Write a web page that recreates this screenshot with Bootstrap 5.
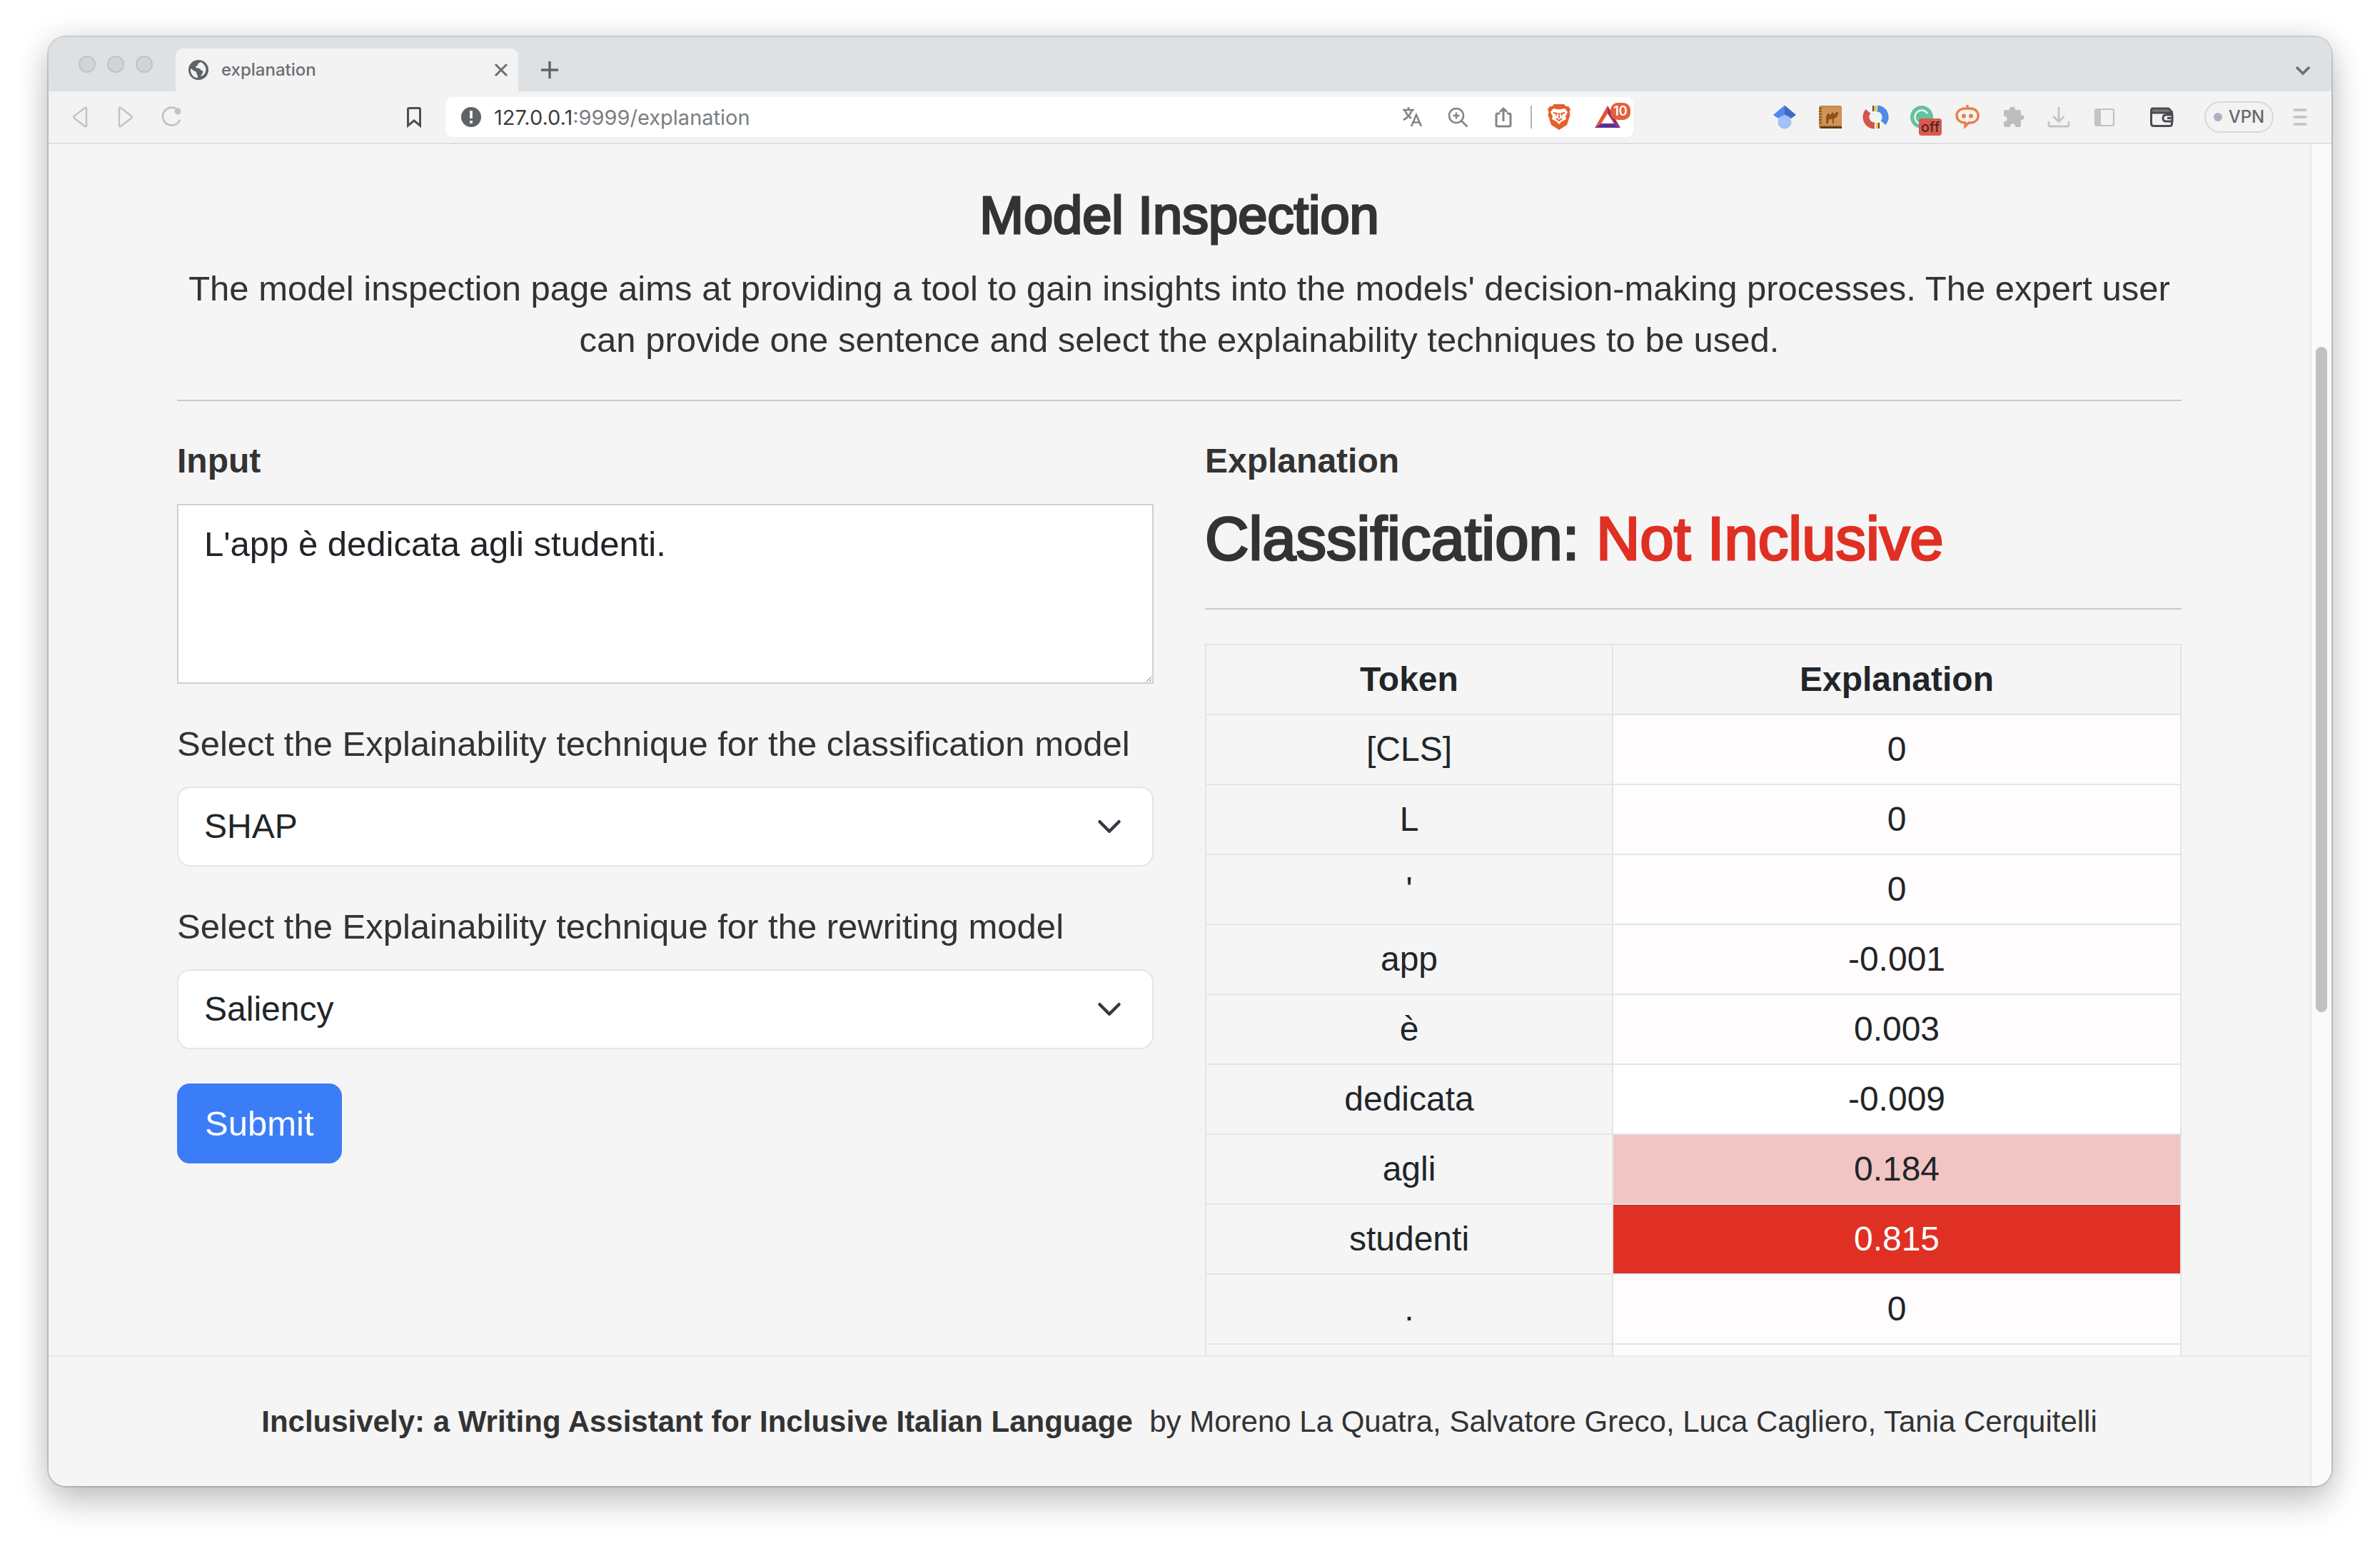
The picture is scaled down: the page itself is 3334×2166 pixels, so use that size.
<!DOCTYPE html>
<html lang="en">
<head>
<meta charset="utf-8">
<meta name="viewport" content="width=device-width, initial-scale=1">
<title>explanation</title>
<link href="https://cdn.jsdelivr.net/npm/bootstrap@5.3.0/dist/css/bootstrap.min.css" rel="stylesheet">
<style>
  html { font-size: 48px; }
  body {
    --bs-body-font-family: "Liberation Sans", Arial, sans-serif;
    --bs-border-width: 2px;
    background: #fff;
    color: #333;
    height: 100vh;
    padding: 52px 68px 84px;
    overflow: hidden;
  }
  .app-window {
    border-radius: 24px;
    background: #f5f5f5;
    box-shadow: 0 0 0 2px rgba(0,0,0,.14), 0 24px 48px rgba(0,0,0,.2), 0 0 44px rgba(0,0,0,.12);
  }
  /* browser chrome */
  .chrome-ui { font-family: Inter, Roboto, sans-serif; line-height: 1; color: #5f6368; }
  .chrome-ui button { border: 0; background: none; padding: 0; line-height: 0; }
  .tab-strip { background: #dde1e4; height: 76px; border-radius: 24px 24px 0 0; }
  .lights { gap: 16px; padding: 26px 32px 0 42px; }
  .lights i { width: 24px; height: 24px; border-radius: 50%; background: #d3d4d6; border: 2px solid #c2c3c5; }
  .page-tab { width: 480px; height: 60px; background: #f3f3f3; border-radius: 10px 10px 0 0; padding: 0 14px 0 18px; margin-right: 30px; font-size: 24px; font-weight: 500; color: #6b6e72; }
  .page-tab span { margin-left: 18px; }
  .strip-end { padding-right: 26px; }
  .strip-cell { height: 60px; }
  .tool-row { height: 74px; background: #f3f3f3; border-bottom: 2px solid #dcdfe5; padding: 0 26px; }
  .icon-set { gap: 28px; }
  .ico { width: 36px; height: 36px; display: block; overflow: visible; flex: none; }
  .faint, .faint button { color: #c3c3c3; }
  .mark-btn { margin: 0 26px 0 304px; color: #4d5054; }
  .address { height: 56px; background: #fff; border-radius: 10px; padding: 0 18px; margin-right: 194px; min-width: 0; }
  .address a { font-size: 29px; color: #7b7e82; text-decoration: none; margin-left: 14px; }
  .address a b { font-weight: 400; color: #3c3f43; }
  .address .icon-set { color: #858585; }
  .divider { width: 2px; height: 32px; background: #b4b4b4; margin: 0 -8px; }
  .rewards { margin-left: 4px; }
  .count { top: -2px; right: -14px; width: 28px; height: 24px; border-radius: 10px; background: #e4603a; color: #fff; font-size: 18px; line-height: 24px; font-weight: 600; }
  .off-tag { top: 20px; left: 14px; width: 32px; height: 24px; border-radius: 4px; background: #da5a4e; color: #4a2522; font-size: 20px; line-height: 24px; font-weight: 500; }
  .wallet { margin: 0 42px 0 44px; color: #4a4d51; }
  .chrome-ui .vpn { width: 97px; height: 44px; border: 2px solid #d5d7dc; border-radius: 22px; font-size: 24px; font-weight: 500; line-height: 1; gap: 9px; margin-right: 19px; color: #65686d; }
  .vpn i { width: 12px; height: 12px; border-radius: 50%; background: #adb1c4; }
  /* page */
  .viewport-area { background: #f5f5f5; border-radius: 0 0 24px 24px; }
  .page-scroll { padding-top: 58px; }
  .page-body { max-width: 2880px; --bs-gutter-x: 72px; }
  .page-body .row { --bs-gutter-x: 72px; }
  .title-md { font-size: 74px; line-height: 84px; font-weight: 400; -webkit-text-stroke: 3px currentColor; }
  .title-lg { font-size: 85px; line-height: 98px; font-weight: 400; -webkit-text-stroke: 3px currentColor; }
  .not-inclusive { color: #df3023; }
  .intro, .field-label, textarea.form-control, .btn-primary { font-size: 49px; line-height: 72px; }
  hr { border-top-width: 2px; border-color: #888; opacity: .4; }
  .form-label { line-height: 72px; }
  textarea.form-control { height: 252px; border-radius: 0; border-color: #cfcfcf; color: #212529; }
  .form-select { border-color: #e2e6e9; border-radius: 18px; color: #212529; background-size: 48px 36px; background-position: right 36px center; }
  .btn-primary { --bs-btn-bg: #3b7df7; --bs-btn-border-color: #3b7df7; --bs-btn-padding-x: 37px; --bs-btn-border-radius: 18px; }
  .token-table { --bs-table-bg: transparent; --bs-table-color: #212529; border-color: #e1e5e9; border-collapse: collapse; }
  .token-table th:first-child { width: 570px; }
  .token-table .near-zero { background-color: #fffcfd; }
  .token-table .zero { background-color: #fff; }
  .token-table .mild { background-color: #f2c5c5; }
  .token-table .strong { background-color: #df3023; color: #fff; }
  .page-footer { height: 183px; border-top: 2px solid #e9e9e9; font-size: 42px; }
  .scroll-track { width: 30px; background: #fafafa; border-left: 2px solid #e8e8e8; padding: 284px 6px 0; border-radius: 0 0 24px 0; }
  .scroll-thumb { height: 932px; border-radius: 8px; background: #c1c1c1; }
</style>
</head>
<body>
<div class="app-window d-flex flex-column h-100 overflow-visible">
  <header class="chrome-ui">
    <div class="tab-strip d-flex align-items-end">
      <div class="lights d-flex align-self-start"><i></i><i></i><i></i></div>
      <div class="page-tab d-flex align-items-center">
        <svg width="28" height="28" viewBox="0 0 28 28"><circle cx="14" cy="14" r="14" fill="#5f6368"/><path d="M17 3c-2 1-4 2-4 4 0 1-2 1-3 3 1 2 3 1 5 2 2 0 2 3 4 3 1 0 2 1 1 3l-3 5c4-1 7-4 7.500-9 0-5-3-9-7.500-11z" fill="#f3f3f3"/><path d="M3 12l6 4c2 0 3 1 2 3l2 3v3C7 25 3 20 3 14z" fill="#f3f3f3"/></svg>
        <span>explanation</span>
        <button class="ms-auto" aria-label="Close tab"><svg width="20" height="20" viewBox="0 0 20 20"><path d="M2 2l16 16M18 2L2 18" stroke="#6b6e72" stroke-width="3"/></svg></button>
      </div>
      <div class="strip-cell d-flex align-items-center"><button aria-label="New tab"><svg width="28" height="28" viewBox="0 0 28 28"><path d="M14 2v24M2 14h24" stroke="#5f6368" stroke-width="3.400"/></svg></button></div>
      <div class="strip-cell strip-end d-flex align-items-center ms-auto"><button aria-label="Search tabs"><svg width="28" height="28" viewBox="0 0 28 28"><path d="M5 10l9 9 9-9" fill="none" stroke="#6b6e72" stroke-width="3.600"/></svg></button></div>
    </div>
    <div class="tool-row d-flex align-items-center">
      <div class="icon-set faint d-flex">
        <button aria-label="Back"><svg class="ico" viewBox="0 0 36 36"><path d="M27 6v24q0 2-2 1L10 19.500q-1.500-1.500 0-3L25 5q2-1 2 1z" fill="none" stroke="currentColor" stroke-width="2.500"/></svg></button>
        <button aria-label="Forward"><svg class="ico" viewBox="0 0 36 36"><path d="M9 6v24q0 2 2 1l15-11.500q1.500-1.500 0-3L11 5q-2-1-2 1z" fill="none" stroke="currentColor" stroke-width="2.500"/></svg></button>
        <button aria-label="Reload"><svg class="ico" viewBox="0 0 36 36"><path d="M28 9A12.500 12.500 0 1 0 30 22" fill="none" stroke="currentColor" stroke-width="2.800"/><circle cx="27" cy="10" r="4.500" fill="currentColor"/></svg></button>
      </div>
      <button class="mark-btn" aria-label="Bookmark"><svg class="ico" viewBox="0 0 36 36"><path d="M9.500 30V7q0-1.500 1.500-1.500h14q1.500 0 1.500 1.500v23l-8.500-7z" fill="none" stroke="currentColor" stroke-width="3"/></svg></button>
      <div class="address d-flex align-items-center flex-grow-1">
        <svg class="ico" viewBox="0 0 36 36"><circle cx="18" cy="18" r="14" fill="#5f6368"/><path d="M18 9v11M18 23v4" stroke="#fff" stroke-width="3.600"/></svg>
        <a href="#"><b>127.0.0.1</b>:9999/explanation</a>
        <div class="icon-set d-flex align-items-center ms-auto">
          <svg class="ico" viewBox="0 0 36 36"><g fill="none" stroke="currentColor" stroke-width="2.600"><path d="M5 8h16M13 4v4M18 8c-2 6-6 11-12 14M8 8c2 6 5 9 9 12"/><path d="M17 31l7-16 7 16M19.500 25.500h9"/></g></svg>
          <svg class="ico" viewBox="0 0 36 36"><g fill="none" stroke="currentColor" stroke-width="2.600"><circle cx="16" cy="16" r="10"/><path d="M23.500 23.500l8 8M16 11.500v9M11.500 16h9"/></g></svg>
          <svg class="ico" viewBox="0 0 36 36"><path d="M13 13H10q-2 0-2 2v14q0 2 2 2h16q2 0 2-2V15q0-2-2-2h-3M18 24V7M13 11l5-5 5 5" fill="none" stroke="currentColor" stroke-width="3"/></svg>
          <span class="divider"></span>
          <svg class="ico" viewBox="0 0 36 36"><path d="M11 0h14l3 3 3 0 3 4-1.500 4 1 4-4.500 14-11 7-11-7-4.500-14 1-4L2 7l3-4 3 0z" fill="#e5602b"/><path d="M10 6l8 1.500L26 6l4 5-3 6 1 4-6 3-4 4-4-4-6-3 1-4-3-6z" fill="#fff"/><path d="M10 12l5 1-1 3M26 12l-5 1 1 3M18 12v8M14 20l4 3 4-3" fill="none" stroke="#e5602b" stroke-width="1.800"/></svg>
          <div class="rewards position-relative">
            <svg class="ico" viewBox="0 0 36 36"><path d="M18 2L0 33l9-6 9-14z" fill="#e8522f"/><path d="M18 2v11l9 14 9 6z" fill="#a02c63"/><path d="M0 33l9-6h18l9 6z" fill="#5f2f91"/></svg>
            <span class="count position-absolute text-center">10</span>
          </div>
        </div>
      </div>
      <div class="icon-set faint d-flex">
        <svg class="ico" viewBox="0 0 36 36"><path d="M18 1.500L2 15l7 5 9-5z" fill="#5288ee"/><path d="M18 1.500L34 15l-7 5-9-5z" fill="#3f6bc4"/><circle cx="18" cy="25" r="9.500" fill="#a3c0f8"/></svg>
        <svg class="ico" viewBox="0 0 36 36"><rect x="2" y="2" width="32" height="32" rx="3" fill="#c98544"/><rect x="7" y="4" width="26" height="25" rx="2" fill="#d09457"/><path d="M3 31h31v3H5z" fill="#5e3a18"/><path d="M4 5v24" stroke="#7d5024" stroke-width="3" stroke-dasharray="2 2"/><path d="M12 27V17l3-5 3 3 3-4 3 3 2-3 3 0 0 3-3 5-3 1v7h-2v-6h-5l-1 6z" fill="#8c531f"/></svg>
        <svg class="ico" viewBox="0 0 36 36"><g fill="none" stroke-width="9"><path d="M7 10A12 12 0 0 0 16 30" stroke="#d4554a"/><path d="M20 6A12 12 0 0 1 28 26" stroke="#4d8be6"/></g><path d="M15 2h4v8h-4zM18 26h4v8h-4z" fill="#f0c33c"/><path d="M14 2v8M22 26v8" stroke="#594f3c" stroke-width="2"/></svg>
        <div class="position-relative">
          <svg class="ico" viewBox="0 0 36 36"><circle cx="18" cy="18" r="16" fill="#66c1a1"/><path d="M26 13a9.500 9.500 0 1 0-5 14" fill="none" stroke="#e6f5ef" stroke-width="2.600"/></svg>
          <span class="off-tag position-absolute text-center">off</span>
        </div>
        <svg class="ico" viewBox="0 0 36 36"><path d="M15 6h7c15 0 15 20 0 20h-2l-5 5v-5C-1 26-1 6 15 6zM18 6V1" fill="none" stroke="#e88146" stroke-width="3.400"/><circle cx="13" cy="16.500" r="3" fill="#e88146"/><circle cx="23" cy="16.500" r="3" fill="#e88146"/></svg>
        <svg class="ico" viewBox="0 0 36 36"><path d="M5 10q0-2 2-2h6c-1-6 9-6 8 0h6q2 0 2 2v5c6-1 6 8 0 7v8q0 2-2 2h-6c1-6-8-6-7 0H7q-2 0-2-2v-6c6 1 6-8 0-7z" fill="#bebebe"/></svg>
        <svg class="ico" viewBox="0 0 36 36"><path d="M18 4v20M10.500 17l7.500 7.500 7.500-7.500M4 24v5q0 2 2 2h24q2 0 2-2v-5" fill="none" stroke="currentColor" stroke-width="2.800"/></svg>
        <svg class="ico" viewBox="0 0 36 36"><rect x="5" y="7" width="26" height="23" rx="2" fill="none" stroke="currentColor" stroke-width="2.200"/><path d="M5 7h8v23H5z" fill="currentColor"/></svg>
      </div>
      <button class="wallet" aria-label="Wallet"><svg class="ico" viewBox="0 0 36 36"><g fill="none" stroke="currentColor" stroke-width="3"><path d="M5 9h24" stroke-width="5" stroke="#7c7e81"/><path d="M32.500 14v-2q0-3-3-3M5 12h27M30 9q-1-3-3-3H6Q3.500 6 3.500 9v18q0 3.500 3.500 3.500h22q3.500 0 3.500-3V24M33 15h-9q-4 0-4 4.500t4 4.500h9zM26 19.500h7"/></g></svg></button>
      <button class="vpn d-flex align-items-center justify-content-center"><i></i>VPN</button>
      <button class="faint" aria-label="Menu"><svg class="ico" viewBox="0 0 36 36"><path d="M10 8h16M10 18h16M10 28h16" stroke="currentColor" stroke-width="3.400" stroke-linecap="round"/></svg></button>
    </div>
  </header>

  <div class="viewport-area d-flex flex-grow-1 overflow-hidden">
    <div class="d-flex flex-column flex-grow-1 overflow-hidden">
      <main class="page-scroll flex-grow-1 overflow-hidden">
        <div class="container page-body">
          <div class="text-center">
            <h2 class="title-md mb-2">Model Inspection</h2>
            <p class="intro mb-0">The model inspection page aims at providing a tool to gain insights into the models' decision-making processes. The expert user can provide one sentence and select the explainability techniques to be used.</p>
          </div>
          <hr>
          <div class="row">
            <form class="col-6">
              <div class="mb-3">
                <label for="sentence" class="form-label fw-bold">Input</label>
                <textarea id="sentence" class="form-control" rows="3">L'app è dedicata agli studenti.</textarea>
              </div>
              <div class="mb-3">
                <label for="clsTechnique" class="form-label field-label">Select the Explainability technique for the classification model</label>
                <select id="clsTechnique" class="form-select"><option>SHAP</option></select>
              </div>
              <div class="mb-3">
                <label for="rwTechnique" class="form-label field-label">Select the Explainability technique for the rewriting model</label>
                <select id="rwTechnique" class="form-select"><option>Saliency</option></select>
              </div>
              <button type="submit" class="btn btn-primary">Submit</button>
            </form>
            <section class="col-6">
              <div class="form-label fw-bold">Explanation</div>
              <h3 class="title-lg mb-2">Classification: <span class="not-inclusive">Not Inclusive</span></h3>
              <hr>
              <table class="table table-sm table-bordered token-table text-center">
                <thead><tr><th scope="col">Token</th><th scope="col">Explanation</th></tr></thead>
                <tbody>
                  <tr><td>[CLS]</td><td class="near-zero">0</td></tr>
                  <tr><td>L</td><td class="near-zero">0</td></tr>
                  <tr><td>'</td><td class="near-zero">0</td></tr>
                  <tr><td>app</td><td class="near-zero">-0.001</td></tr>
                  <tr><td>è</td><td class="near-zero">0.003</td></tr>
                  <tr><td>dedicata</td><td class="zero">-0.009</td></tr>
                  <tr><td>agli</td><td class="mild">0.184</td></tr>
                  <tr><td>studenti</td><td class="strong">0.815</td></tr>
                  <tr><td>.</td><td class="near-zero">0</td></tr>
                  <tr><td>&nbsp;</td><td class="near-zero">&nbsp;</td></tr>
                </tbody>
              </table>
            </section>
          </div>
        </div>
      </main>
      <footer class="page-footer flex-shrink-0 d-flex align-items-center justify-content-center">
        <div><strong>Inclusively: a Writing Assistant for Inclusive Italian Language</strong>&nbsp; by Moreno La Quatra, Salvatore Greco, Luca Cagliero, Tania Cerquitelli</div>
      </footer>
    </div>
    <div class="scroll-track flex-shrink-0"><div class="scroll-thumb"></div></div>
  </div>
</div>
<script src="https://cdn.jsdelivr.net/npm/bootstrap@5.3.0/dist/js/bootstrap.bundle.min.js"></script>
</body>
</html>
